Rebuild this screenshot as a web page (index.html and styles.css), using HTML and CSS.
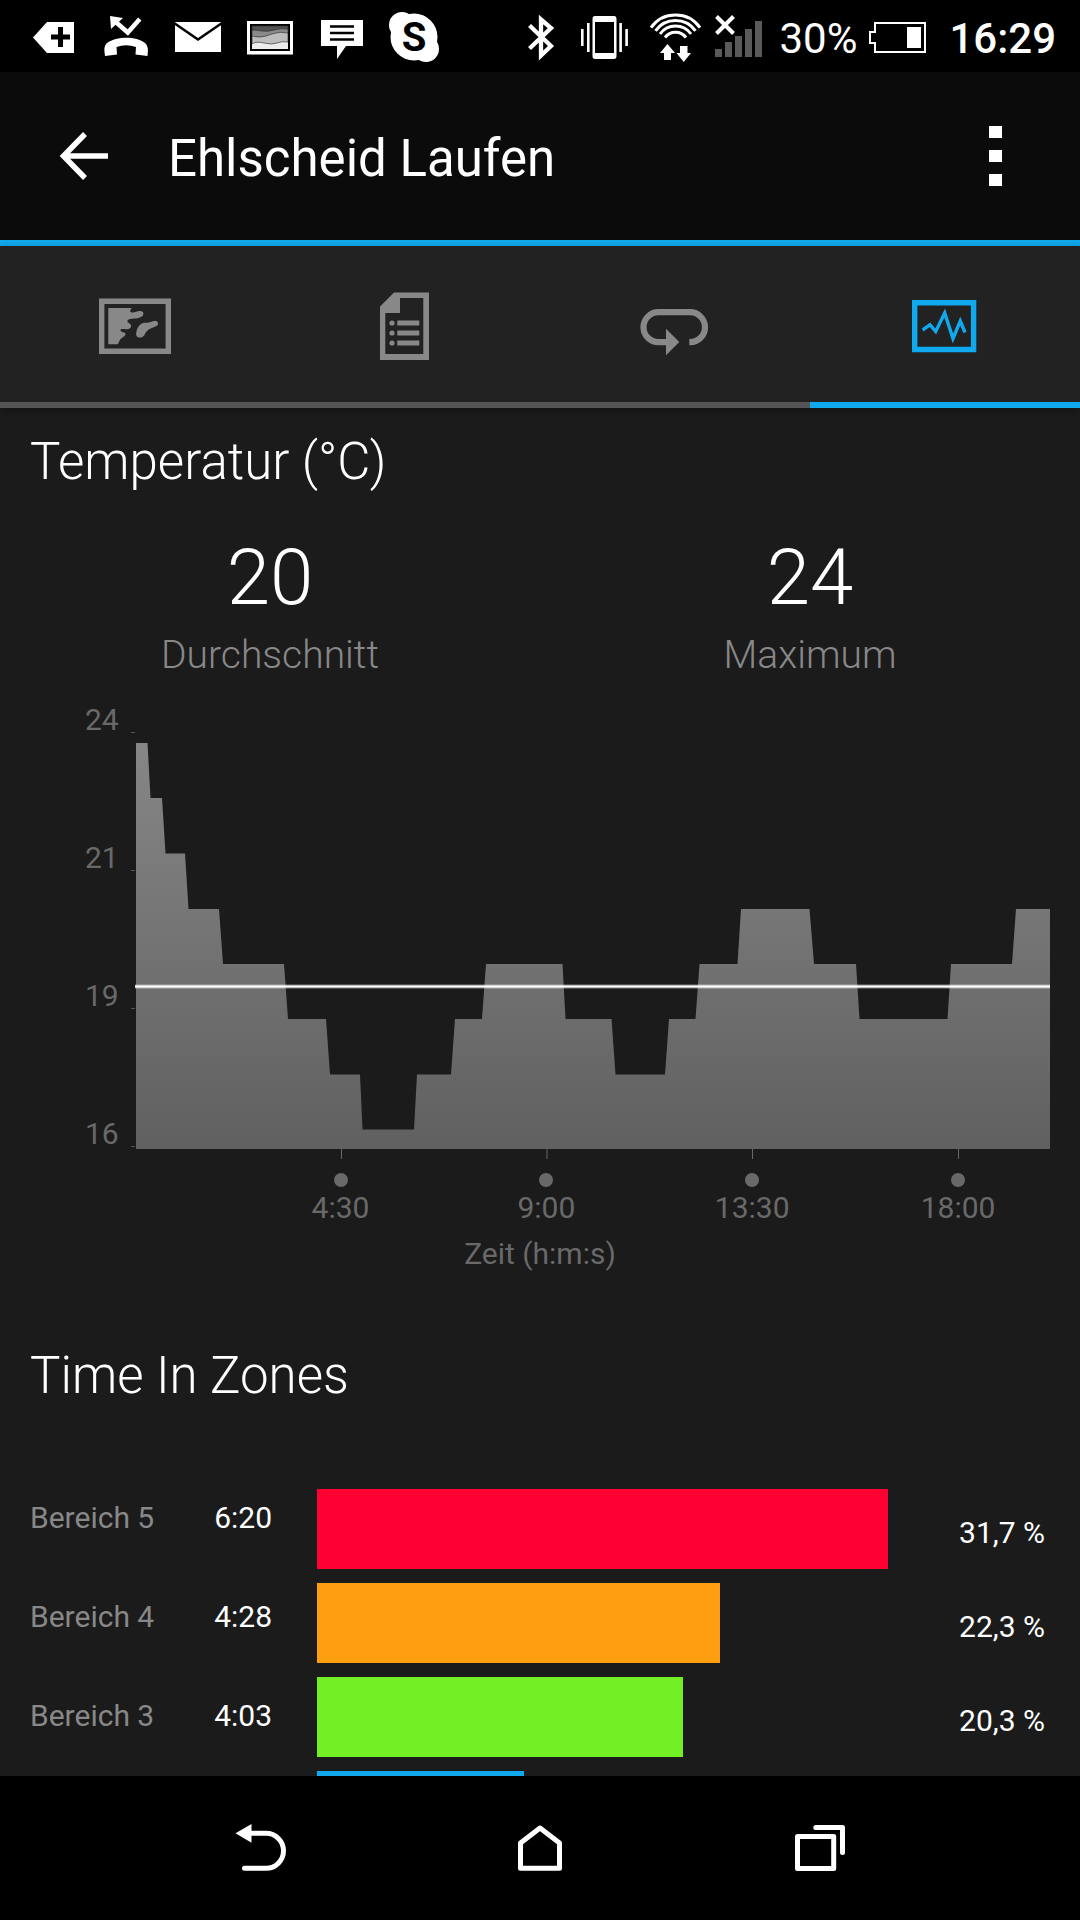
FILE: index.html
```html
<!DOCTYPE html>
<html lang="de">
<head>
  <meta charset="UTF-8">
  <meta name="viewport" content="width=device-width, initial-scale=1.0">
  <title>Ehlscheid Laufen</title>
  <link rel="stylesheet" href="styles.css">
</head>
<body>
  <!-- Statusleiste -->
  <div class="status-bar">
    <div class="notifications">
      <svg width="72" height="72" viewBox="0 0 72 72">
        <path fill="#fff" d="M15 37.500 29 22H56V53H29Z"/>
        <path stroke="#000" stroke-width="5" d="M33 37H52M42.500 27V47"/>
      </svg>
      <svg width="72" height="72" viewBox="0 0 72 72">
        <path fill="#fff" d="M15 56Q13 46 17 43C27 36 46 36 55 43Q59 46 57.500 56L45.500 54.500 46 47Q36 43.500 26.500 47L27 54.500Z"/>
        <path fill="none" stroke="#fff" stroke-width="4.500" d="M23.500 20 37.800 32.500 49.800 19"/>
        <path fill="#fff" d="M20 16 33 18 21 29Z"/>
      </svg>
      <svg width="72" height="72" viewBox="0 0 72 72">
        <path fill="#fff" d="M13 22H59V52H13Z"/>
        <path fill="none" stroke="#000" stroke-width="2.500" d="M12 23 36 39.500 60 23"/>
      </svg>
      <svg width="72" height="72" viewBox="0 0 72 72">
        <path fill="#fff" d="M13 21H59V54.500H13Z"/>
        <path fill="#000" d="M16 24H56V51H16Z"/>
        <path fill="#ececec" d="M18 26H54V49H18Z"/>
        <path fill="#bdbdbd" stroke="#222" stroke-width=".6" d="M18 26H54V42Q48 41 43 43T30 43T18 44Z"/>
        <path fill="#8a8a8a" stroke="#222" stroke-width=".6" d="M18 26H54V33Q46 31 38 34T26 37T18 36Z"/>
        <path fill="#555" stroke="#222" stroke-width=".6" d="M18 26H54V29Q46 28 40 30T28 31T18 30Z"/>
      </svg>
      <svg width="72" height="72" viewBox="0 0 72 72">
        <path fill="#fff" d="M15 20H57V46H40L31 59V46H15Z"/>
        <path stroke="#000" stroke-width="2.300" d="M24 26.500H48M24 33H48M24 39.500H48"/>
      </svg>
      <svg width="72" height="72" viewBox="0 0 72 72">
        <g fill="#fff">
          <circle cx="36" cy="37" r="23.500"/>
          <circle cx="24" cy="25" r="13"/>
          <circle cx="48" cy="49" r="13"/>
        </g>
        <text class="skype-s" x="36" y="51" text-anchor="middle">S</text>
      </svg>
    </div>
    <div class="system">
      <svg width="64" height="72" viewBox="0 0 64 72">
        <path fill="none" stroke="#fff" stroke-width="4.300" d="M20.500 25.500 42 46 32 55.500V19.500L42 28 20.500 48.500"/>
      </svg>
      <svg width="64" height="72" viewBox="0 0 64 72">
        <path fill="#fff" fill-rule="evenodd" d="M22 16H41Q43.500 16 43.500 19V56Q43.500 59 41 59H22Q19.500 59 19.500 56V19Q19.500 16 22 16ZM22 22V53H41V22Z"/>
        <path stroke="#fff" stroke-width="2.600" d="M9.300 29V46M15.300 23V52M47.600 23V52M53.600 29V46"/>
      </svg>
      <svg width="76" height="72" viewBox="0 0 76 72">
        <path fill="none" stroke="#fff" stroke-width="3" d="M14 27.600A30 30 0 0 1 63 27.600M18.500 30.800A24.500 24.500 0 0 1 58.500 30.800M23 34A19 19 0 0 1 54 34M28 37.500A13 13 0 0 1 49 37.500"/>
        <path fill="#fff" d="M30.500 44 38 53H34V60H27V53H23ZM46.700 62 39.500 53H43V46H50.500V53H54Z"/>
      </svg>
      <svg width="52" height="72" viewBox="0 0 52 72">
        <path fill="#5a5a5a" d="M2 49H9V57H2ZM12 42H19V57H12ZM22 36H29V57H22ZM32 29H39V57H32ZM42 21H49V57H42Z"/>
        <path stroke="#fff" stroke-width="4" d="M3.500 16.500 20.500 33.500M20.500 16.500 3.500 33.500"/>
      </svg>
      <span class="battery-text">30%</span>
      <svg width="58" height="72" viewBox="0 0 58 72">
        <path fill="none" stroke="#fff" stroke-width="2" d="M6 23H56V52H6V43H1V32H6Z"/>
        <path fill="#fff" d="M38 27H52V48H38Z"/>
      </svg>
      <span class="clock">16:29</span>
    </div>
  </div>

  <header class="app-bar">
    <button class="icon-button" type="button" aria-label="Zurück">
      <svg width="72" height="72" viewBox="0 0 72 72">
        <path fill="none" stroke="#fff" stroke-width="5.500" d="M60 36H17M37 14 15.500 36 37 58"/>
      </svg>
    </button>
    <h1>Ehlscheid Laufen</h1>
    <button class="icon-button" type="button" aria-label="Menü">
      <svg width="72" height="72" viewBox="0 0 72 72">
        <path fill="#fff" d="M29 6H42V18H29ZM29 30H42V42H29ZM29 54H42V66H29Z"/>
      </svg>
    </button>
  </header>

  <nav class="tabs">
    <a class="tab" href="#karte" aria-label="Karte">
      <svg width="72" height="72" viewBox="0 0 72 72">
        <path fill="none" stroke="currentColor" stroke-width="5.400" d="M2.700 13.200H69.300V63.200H2.700Z"/>
        <path fill="currentColor" d="M9.300 20H32.700Q30 23 32 24.200C35 25.500 38 22.500 41.500 23C45 23.500 45.500 27 42.500 28.800C38 31.500 34 30 30 31.300C27 33 28.500 34.500 30.500 35.500C33 37 32.500 40 29.500 41C26 42 22 40 21.500 42C21 44 25 44 26.300 45.300C27.500 48 22.500 49.500 21 52Q19.500 54 19 56.300H9.300Z"/>
        <path fill="currentColor" d="M51 34.300C54 33.500 56 32 58 33.500C60 35.500 59 37.500 56.500 38.500C53 40 50 40.500 48 43C45.500 45.500 45.500 49.500 41.500 49.500C37.500 50 36.500 47 37.500 43.500C38.500 39 41 35.500 45 34.800Q48 34.800 51 34.300Z"/>
      </svg>
    </a>
    <a class="tab" href="#details" aria-label="Details">
      <svg width="72" height="72" viewBox="0 0 72 72">
        <path fill="currentColor" fill-rule="evenodd" d="M25 4.500H60V72H11V18.500ZM31 10V25H16.300V66H54.300V10Z"/>
        <path stroke="currentColor" stroke-width="5" d="M28.300 35H50.300M28.300 45H50.300M28.300 55H50.300"/>
        <g fill="currentColor">
          <circle cx="23" cy="35" r="2.600"/>
          <circle cx="23" cy="45" r="2.600"/>
          <circle cx="23" cy="55" r="2.600"/>
        </g>
      </svg>
    </a>
    <a class="tab" href="#runden" aria-label="Runden">
      <svg width="72" height="72" viewBox="0 0 72 72">
        <path fill="none" stroke="currentColor" stroke-width="6.200" d="M50.300 54.200H51A15 15 0 0 0 51 24.200H19.500A15 15 0 0 0 19.500 54.200H28"/>
        <path fill="currentColor" d="M27 40.700 40.300 54 27 67.300Z"/>
      </svg>
    </a>
    <a class="tab active" href="#diagramme" aria-label="Diagramme">
      <svg width="72" height="72" viewBox="0 0 72 72">
        <path fill="none" stroke="currentColor" stroke-width="5.400" d="M5.700 14.700H64.600V61.500H5.700Z"/>
        <path fill="none" stroke="currentColor" stroke-width="3.400" d="M13.700 42 21 36.700 26.700 43.500 35.700 25 44 50.500 51.300 33 56 44.500"/>
      </svg>
    </a>
  </nav>

  <main class="content">
    <section>
      <h2>Temperatur (°C)</h2>
      <div class="stats">
        <div class="stat">
          <div class="stat-value">20</div>
          <div class="stat-label">Durchschnitt</div>
        </div>
        <div class="stat">
          <div class="stat-value">24</div>
          <div class="stat-label">Maximum</div>
        </div>
      </div>

      <div class="chart">
        <div class="y-axis">
          <span>24</span>
          <span>21</span>
          <span>19</span>
          <span>16</span>
        </div>
        <svg class="plot" viewBox="0 0 919 457" preserveAspectRatio="none">
          <defs>
            <linearGradient id="area" x1="0" y1="0" x2="0" y2="1">
              <stop offset="0" stop-color="#868686"/>
              <stop offset="1" stop-color="#606060"/>
            </linearGradient>
          </defs>
          <path stroke="#555" stroke-width="1" d="M0 30.500H4M0 168.500H4M0 306.500H4M0 444.500H4"/>
          <path stroke="#696969" stroke-width="1" d="M210.500 447V457M416 447V457M621.500 447V457M827.500 447V457"/>
          <path fill="url(#area)" d="M5 447V41H16.500L19.500 96H31L34.500 151.500H54L57.500 207H88L92 262H153L157 317H195L199 372.500H229L231.500 427.500H283L286 372.500H320L324 317H351L355 262H431.500L434.500 317H480.500L484.500 372.500H534L538 317H564.500L568.500 262H606.500L610 207H678.500L683 262H725L728.500 317H816.500L820 262H881L885 207H919V447Z"/>
          <path stroke="#fff" stroke-opacity=".45" stroke-width="4" d="M4 284.500H919"/>
          <path stroke="#fff" stroke-width="2" d="M4 284.500H919"/>
        </svg>
        <div class="x-axis">
          <span>4:30</span>
          <span>9:00</span>
          <span>13:30</span>
          <span>18:00</span>
        </div>
      </div>
      <div class="axis-title">Zeit (h:m:s)</div>
    </section>

    <section>
      <h2 class="zones-title">Time In Zones</h2>
      <div class="zones">
        <table class="zone-times">
          <tr><th scope="row">Bereich 5</th><td>6:20</td></tr>
          <tr><th scope="row">Bereich 4</th><td>4:28</td></tr>
          <tr><th scope="row">Bereich 3</th><td>4:03</td></tr>
        </table>
        <div class="zone-bars">
          <div class="zone-row">
            <div class="track"><div class="bar bar-5" style="width: 100%"></div></div>
            <div class="percent">31,7 %</div>
          </div>
          <div class="zone-row">
            <div class="track"><div class="bar bar-4" style="width: 70.500%"></div></div>
            <div class="percent">22,3 %</div>
          </div>
          <div class="zone-row">
            <div class="track"><div class="bar bar-3" style="width: 64.100%"></div></div>
            <div class="percent">20,3 %</div>
          </div>
          <div class="zone-row">
            <div class="track"><div class="bar bar-2" style="width: 36.300%"></div></div>
            <div class="percent"></div>
          </div>
        </div>
      </div>
    </section>
  </main>

  <!-- Navigationsleiste -->
  <div class="nav-bar">
    <button type="button" aria-label="Zurück">
      <svg width="72" height="72" viewBox="0 0 72 72">
        <path fill="none" stroke="#fff" stroke-width="5" stroke-linecap="round" d="M26 21.300H41A17.500 17.500 0 0 1 41 56.300H19.500"/>
        <path fill="#fff" d="M10.500 21.300 26.500 12V30.700Z"/>
      </svg>
    </button>
    <button type="button" aria-label="Startseite">
      <svg width="72" height="72" viewBox="0 0 72 72">
        <path fill="none" stroke="#fff" stroke-width="5" stroke-linejoin="round" d="M36 16 55.500 31V56.300H16.500V31Z"/>
      </svg>
    </button>
    <button type="button" aria-label="Letzte Apps">
      <svg width="72" height="72" viewBox="0 0 72 72">
        <g fill="none" stroke="#fff" stroke-width="5" stroke-linejoin="round" stroke-linecap="round">
          <path d="M14.500 24.500H50.700V56.500H14.500Z"/>
          <path d="M32.800 15.500H59.500V40.500"/>
        </g>
      </svg>
    </button>
  </div>
</body>
</html>
```

FILE: styles.css
```css
* {
  box-sizing: border-box;
}

body {
  margin: 0;
  height: 100vh;
  display: flex;
  flex-direction: column;
  background-color: #1b1b1b;
  color: #fff;
  font-family: Roboto, sans-serif;
  font-size: 30px;
  line-height: 36px;
}

svg {
  display: block;
  flex: none;
}

button {
  padding: 0;
  border: none;
  background: none;
  cursor: pointer;
}

/* Statusleiste */
.status-bar {
  flex: none;
  display: flex;
  justify-content: space-between;
  height: 72px;
  padding: 0 24px 0 18px;
  background-color: #000;
}

.notifications, .system {
  display: flex;
  align-items: center;
}

.skype-s {
  font-size: 40px;
  font-weight: 700;
  fill: #000;
}

.battery-text {
  margin: 6px 12px 0 14px;
  font-size: 42px;
}

.clock {
  margin: 6px 0 0 22px;
  font-size: 42px;
  font-weight: 500;
}

.app-bar {
  flex: none;
  display: flex;
  align-items: center;
  height: 174px;
  padding: 0 48px;
  background-color: #0b0b0b;
  border-bottom: 6px solid #11a9ed;
}

.app-bar h1 {
  flex: 1;
  margin: 6px 0 0 48px;
  font-size: 51px;
  font-weight: 400;
  line-height: 60px;
}

.tabs {
  flex: none;
  display: grid;
  grid-template-columns: repeat(4, 1fr);
  background-color: #222;
  box-shadow: 0 2px 8px rgba(0, 0, 0, 0.3);
}

.tab {
  display: flex;
  justify-content: center;
  align-items: center;
  height: 162px;
  color: #888;
  border-bottom: 6px solid #555;
}

.tab.active {
  color: #11a9ed;
  border-bottom-color: #11a9ed;
}

.content {
  flex: 1;
  min-height: 0;
  padding: 24px 30px 0;
  overflow-y: auto;
  scrollbar-width: none;
}

h2 {
  margin: 0;
  font-size: 51px;
  font-weight: 300;
  line-height: 60px;
}

.stats {
  display: grid;
  grid-template-columns: 1fr 1fr;
  margin: 40px -30px 24px;
  text-align: center;
  font-weight: 300;
}

.stat-value {
  font-size: 78px;
  line-height: 92px;
}

.stat-label {
  margin-top: 8px;
  color: #888;
  font-size: 39px;
  line-height: 46px;
}

/* Diagramm */
.chart {
  display: grid;
  grid-template-columns: 101px 1fr;
  color: #696969;
}

.y-axis {
  display: flex;
  flex-direction: column;
  justify-content: space-between;
  height: 450px;
  padding-left: 55px;
}

.plot {
  width: 100%;
  height: 457px;
}

.x-axis {
  grid-column: 2;
  display: grid;
  grid-template-columns: repeat(4, 1fr);
  margin-right: -1.2%;
  padding: 14px 0 0 11.6%;
  text-align: center;
}

.x-axis span::before {
  content: '';
  display: block;
  width: 14px;
  height: 14px;
  margin: 0 auto 3px;
  border-radius: 50%;
  background-color: #696969;
}

.axis-title {
  margin-top: 10px;
  color: #696969;
  text-align: center;
}

/* Zonen */
.zones-title {
  margin: 74px 0 62px;
}

.zones {
  display: flex;
  align-items: flex-start;
}

.zone-times {
  width: 287px;
  border-collapse: collapse;
}

.zone-times th, .zone-times td {
  height: 99px;
  padding: 0;
}

.zone-times th {
  color: #888;
  font-weight: 400;
  text-align: left;
}

.zone-times td {
  padding-right: 45px;
  text-align: right;
}

.zone-bars {
  flex: 1;
  display: flex;
  flex-direction: column;
  gap: 14px;
  padding-top: 21px;
}

.zone-row {
  display: flex;
  align-items: center;
  height: 80px;
}

.track {
  flex: 1;
}

.bar {
  height: 80px;
}

.bar-5 {
  background-color: #ff0033;
}

.bar-4 {
  background-color: #ff9f0f;
}

.bar-3 {
  background-color: #73ef26;
}

.bar-2 {
  background-color: #11a9ed;
}

.percent {
  width: 162px;
  padding: 8px 5px 0 0;
  text-align: right;
}

.nav-bar {
  flex: none;
  display: grid;
  grid-template-columns: repeat(3, 1fr);
  height: 144px;
  padding: 0 121px;
  background-color: #000;
}

.nav-bar button {
  display: flex;
  justify-content: center;
  align-items: center;
}
```
